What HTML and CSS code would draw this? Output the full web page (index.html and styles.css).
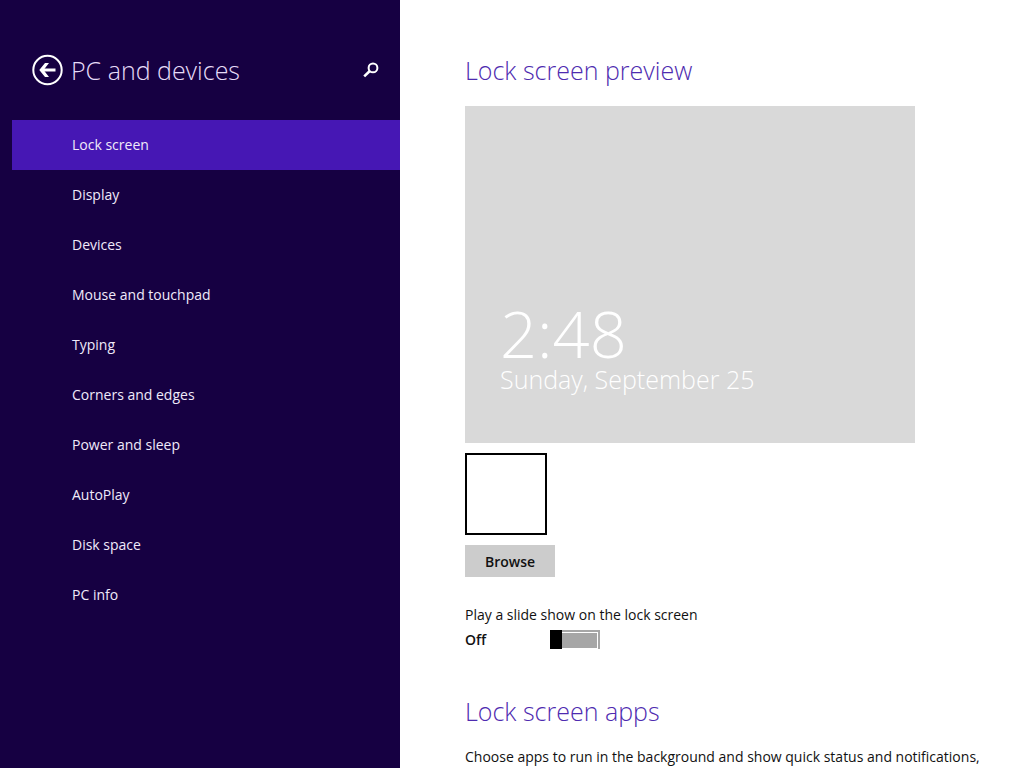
FILE: index.html
```html
<!DOCTYPE html>
<html lang="en">

<head>
    <meta charset="UTF-8">
    <meta name="viewport" content="width=device-width, initial-scale=1.0">
    <title>PC and devices</title>
    <link rel="stylesheet" href="styles.css">
</head>

<body>

<div class="settings">
    <aside class="sidebar">
        <header class="sidebar-header">
            <button class="icon-button" type="button" aria-label="Back">
                <svg width="32" height="32" viewBox="0 0 32 32" fill="none" stroke="#fff">
                    <circle cx="15.5" cy="16" r="14.2" stroke-width="2"/>
                    <path d="M9.5 16H23.5" stroke-width="3"/>
                    <path d="M17 9H13L7.3 16L13 23H17L11.6 16Z" fill="#fff" stroke="none"/>
                </svg>
            </button>
            <h1 class="title">PC and devices</h1>
            <button class="icon-button" type="button" aria-label="Search">
                <svg width="16" height="16" viewBox="0 0 16 16" fill="none" stroke="#fff">
                    <circle cx="10" cy="5.9" r="4.4" stroke-width="2"/>
                    <path d="M6.8 9L1.2 14.4" stroke-width="2.6"/>
                </svg>
            </button>
        </header>

        <nav class="menu">
            <a class="menu-item active" href="#">Lock screen</a>
            <a class="menu-item" href="#">Display</a>
            <a class="menu-item" href="#">Devices</a>
            <a class="menu-item" href="#">Mouse and touchpad</a>
            <a class="menu-item" href="#">Typing</a>
            <a class="menu-item" href="#">Corners and edges</a>
            <a class="menu-item" href="#">Power and sleep</a>
            <a class="menu-item" href="#">AutoPlay</a>
            <a class="menu-item" href="#">Disk space</a>
            <a class="menu-item" href="#">PC info</a>
        </nav>
    </aside>

    <main class="content">
        <section class="section">
            <h2 class="heading">Lock screen preview</h2>
            <div class="preview">
                <div class="clock">2:48</div>
                <div class="date">Sunday, September 25</div>
            </div>
            <button class="thumbnail" type="button" aria-label="Background picture"></button>
            <button class="browse" type="button">Browse</button>

            <label class="label" for="slideshow">Play a slide show on the lock screen</label>
            <div class="toggle-row">
                <span class="toggle-state">Off</span>
                <input class="toggle" type="checkbox" id="slideshow">
            </div>
        </section>

        <section class="section">
            <h2 class="heading">Lock screen apps</h2>
            <p class="text">Choose apps to run in the background and show quick status and notifications,</p>
        </section>
    </main>
</div>

</body>

</html>
```

FILE: styles.css
```css
* {
    box-sizing: border-box;
}

body {
    margin: 0;
    font-family: "Open Sans", "Noto Sans", sans-serif;
    font-size: 14px;
    line-height: 20px;
    color: #111;
    background-color: #fff;
}

button {
    font-family: inherit;
    border: none;
    padding: 0;
    cursor: pointer;
}

.settings {
    display: flex;
    min-height: 100vh;
}

/* Left panel */
.sidebar {
    flex: 0 0 400px;
    background-color: #160042;
    color: #fff;
}

.sidebar-header {
    display: flex;
    align-items: center;
    gap: 7px;
    height: 40px;
    margin: 50px 21px 30px 32px;
}

.icon-button {
    display: flex;
    background: none;
}

.title,
.heading {
    margin: 0;
    font-size: 25px;
    font-weight: 300;
    line-height: 40px;
}

.title {
    flex: 1;
    color: #e6dcf8;
}

.menu {
    display: flex;
    flex-direction: column;
    padding-left: 12px;
}

.menu-item {
    padding: 15px 20px 15px 60px;
    color: #f0eafa;
    text-decoration: none;
}

.menu-item.active {
    background-color: #4617b4;
}

/* Right panel */
.content {
    flex: 1;
    min-width: 0;
    padding: 50px 40px 0 65px;
}

.section {
    display: flex;
    flex-direction: column;
    align-items: flex-start;
    margin-bottom: 37px;
}

.section:last-child {
    margin-bottom: 0;
}

.heading {
    margin-bottom: 16px;
    color: #4e2bb0;
}

.preview {
    display: flex;
    flex-direction: column;
    justify-content: flex-end;
    width: 100%;
    max-width: 450px;
    aspect-ratio: 450 / 337;
    padding: 0 35px 48px;
    background-color: #d9d9d9;
    color: #fff;
    font-weight: 300;
}

.clock {
    font-size: 65px;
    line-height: 60px;
}

.date {
    font-size: 25px;
    line-height: 32px;
}

.thumbnail {
    width: 82px;
    height: 82px;
    margin: 10px 0;
    background-color: #fff;
    border: 2px solid #000;
}

.browse {
    width: 90px;
    height: 32px;
    margin-bottom: 28px;
    background-color: #ccc;
    color: #111;
    font-size: 14px;
    font-weight: 600;
}

.toggle-row {
    display: flex;
    align-items: center;
    height: 29px;
}

.toggle-state {
    width: 85px;
    font-weight: 600;
}

.toggle {
    appearance: none;
    width: 50px;
    height: 19px;
    margin: 0;
    padding: 2px 2px 2px 12px;
    background: linear-gradient(to right, #000 12px, #a6a6a6 12px);
}

.toggle::before {
    content: "";
    display: block;
    height: 15px;
    border: 1px solid #fff;
    border-left: none;
}

.toggle:checked {
    padding: 2px 12px 2px 2px;
    background: linear-gradient(to left, #000 12px, #4617b4 12px);
}

.text {
    margin: 0;
}
```
